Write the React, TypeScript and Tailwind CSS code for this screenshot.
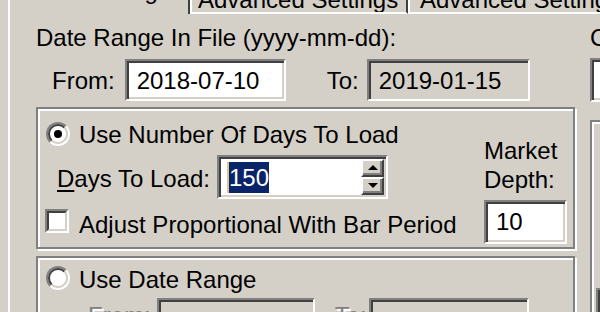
const sunken =
  "border-2 border-t-[#808080] border-l-[#808080] border-b-white border-r-white shadow-[inset_2px_2px_0_#404040,inset_-2px_-2px_0_#d4d0c8]";
const etched = "border-2 border-[#808080] shadow-[inset_2px_2px_0_#fff,2px_2px_0_#fff]";
const disabledText = "text-[#808080] [text-shadow:2px_2px_0_#fff]";

function Radio({ checked }: { checked?: boolean }) {
  return (
    <span className="flex h-[24px] w-[24px] shrink-0 rounded-full border-2 border-t-[#808080] border-l-[#808080] border-b-white border-r-white">
      <span className="flex h-full w-full items-center justify-center rounded-full border-2 border-t-[#404040] border-l-[#404040] border-b-[#d4d0c8] border-r-[#d4d0c8] bg-white">
        {checked && <span className="h-[8px] w-[8px] rounded-full bg-black" />}
      </span>
    </span>
  );
}

function Checkbox() {
  return (
    <span className="flex h-[24px] w-[24px] shrink-0 border-2 border-t-[#808080] border-l-[#808080] border-b-white border-r-white">
      <span className="h-full w-full border-2 border-t-[#404040] border-l-[#404040] border-b-[#d4d0c8] border-r-[#d4d0c8] bg-white" />
    </span>
  );
}

function SpinButton({ up }: { up?: boolean }) {
  return (
    <span className="flex h-[18px] w-full items-center justify-center border-2 border-t-white border-l-white border-b-[#404040] border-r-[#404040] bg-[#d4d0c8] shadow-[inset_-2px_-2px_0_#808080]">
      <svg width="10" height="6" viewBox="0 0 10 6">
        {up ? <polygon points="5,0 10,5 0,5" fill="#000" /> : <polygon points="0,0 10,0 5,5" fill="#000" />}
      </svg>
    </span>
  );
}

export default function App() {
  return (
    <div className="flex h-[312px] w-[600px] overflow-hidden bg-[#d4d0c8] font-['Liberation_Sans',Arial,sans-serif] text-[24px] leading-none text-black">
      <div className="w-[8px] shrink-0" />
      <div className="flex min-w-0 flex-1 flex-col border-l-2 border-white">
        {/* tab strip, mostly scrolled off the top */}
        <div className="flex h-[14px] shrink-0">
          <div className="w-[180px] shrink-0 overflow-hidden border-r-2 border-[#404040] pl-[5px]">
            <div className="mt-[-21px] whitespace-nowrap">Data Loading</div>
          </div>
          <div className="w-[218px] shrink-0 overflow-hidden border-b-2 border-l-2 border-b-white border-l-white border-r-2 border-r-[#404040] pl-[6px]">
            <div className="mt-[-12px] whitespace-nowrap">Advanced Settings</div>
          </div>
          <div className="min-w-0 flex-1 overflow-hidden border-b-2 border-l-2 border-white pl-[10px]">
            <div className="mt-[-12px] whitespace-nowrap">Advanced Settings</div>
          </div>
        </div>

        <div className="flex min-h-0 flex-1">
          <div className="flex w-[580px] shrink-0 flex-col">
            <div className="ml-[26px] mt-[12px] h-[24px] shrink-0 whitespace-nowrap">Date Range In File (yyyy-mm-dd):</div>

            <div className="ml-[42px] mt-[9px] flex h-[42px] shrink-0 items-center">
              <span className="mt-[2px]">From:</span>
              <div className={`ml-[10px] flex h-[42px] w-[161px] items-center bg-white pl-[10px] pt-[2px] ${sunken}`}>2018-07-10</div>
              <span className="ml-[41px] mt-[2px]">To:</span>
              <div className={`ml-[8px] flex h-[42px] w-[163px] items-center pl-[10px] pt-[2px] ${sunken}`}>2019-01-15</div>
            </div>

            <div className={`ml-[26px] mt-[6px] flex h-[142px] w-[539px] shrink-0 ${etched}`}>
              <div className="flex w-[446px] shrink-0 flex-col pl-[8px]">
                <div className="mt-[13px] flex h-[24px] shrink-0 items-start">
                  <Radio checked />
                  <span className="ml-[9px] mt-[1px] whitespace-nowrap">Use Number Of Days To Load</span>
                </div>
                <div className="mt-[9px] flex h-[44px] shrink-0 items-center pl-[11px]">
                  <span className="mt-[3px] whitespace-nowrap">
                    <span className="underline decoration-2 underline-offset-[3px]">D</span>ays To Load:
                  </span>
                  <div className={`ml-[7px] flex h-[44px] w-[171px] items-center bg-white pl-[8px] ${sunken}`}>
                    <span className="h-[31px] w-[2px] bg-[#d8c890]" />
                    <span className="h-[31px] bg-[#0a246a] pt-[4px] text-white">150</span>
                    <div className="ml-auto mr-[2px] flex w-[23px] flex-col">
                      <SpinButton up />
                      <SpinButton />
                    </div>
                  </div>
                </div>
                <div className="mt-[10px] flex h-[24px] shrink-0 items-start">
                  <span className="-ml-[1px]">
                    <Checkbox />
                  </span>
                  <span className="ml-[10px] mt-[4px] whitespace-nowrap">Adjust Proportional With Bar Period</span>
                </div>
              </div>
              <div className="flex flex-col">
                <div className="mt-[27px] h-[58px] shrink-0 leading-[29px]">
                  Market
                  <br />
                  Depth:
                </div>
                <div className={`mt-[6px] flex h-[44px] w-[83px] shrink-0 items-center bg-white pl-[10px] ${sunken}`}>10</div>
              </div>
            </div>

            <div className={`ml-[26px] mt-[7px] flex h-[120px] w-[539px] shrink-0 flex-col pl-[8px] ${etched}`}>
              <div className="mt-[8px] flex h-[24px] shrink-0 items-start">
                <Radio />
                <span className="ml-[9px] mt-[2px] whitespace-nowrap">Use Date Range</span>
              </div>
              <div className="mt-[8px] flex shrink-0 items-start pl-[42px]">
                <span className={`mt-[6px] ${disabledText}`}>From:</span>
                <div className={`ml-[6px] h-[44px] w-[158px] ${sunken}`} />
                <span className={`ml-[20px] mt-[6px] ${disabledText}`}>To:</span>
                <div className={`ml-[2px] h-[44px] w-[160px] ${sunken}`} />
              </div>
            </div>
          </div>

          <div className="flex w-[200px] shrink-0 flex-col">
            <div className="mt-[12px] h-[24px] shrink-0 whitespace-nowrap">Connection:</div>
            <div className={`mt-[8px] h-[44px] w-[150px] shrink-0 bg-white ${sunken}`} />
            <div className={`mt-[18px] h-[220px] w-[180px] shrink-0 ${etched}`}>
              <div className={`ml-[4px] mt-[166px] h-[44px] w-[120px] ${sunken}`} />
            </div>
          </div>
        </div>
      </div>
    </div>
  );
}
